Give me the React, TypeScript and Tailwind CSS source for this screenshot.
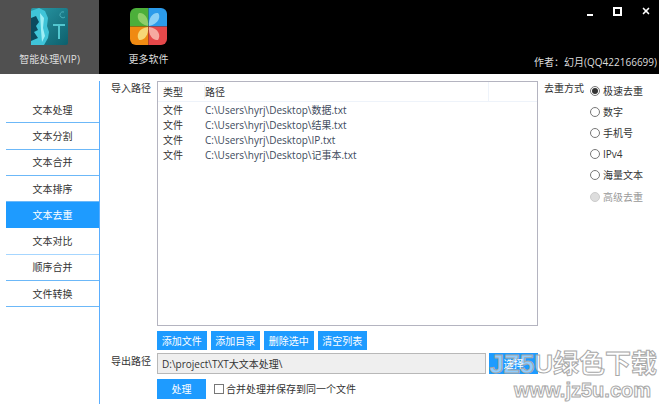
import { X } from 'lucide-react';

const font = 'font-["Open_Sans","Noto_Sans_CJK_SC",sans-serif]';

const navItems = ['文本处理', '文本分割', '文本合并', '文本排序', '文本去重', '文本对比', '顺序合并', '文件转换'];
const files = ['数据.txt', '结果.txt', 'IP.txt', '记事本.txt'];
const modes = ['极速去重', '数字', '手机号', 'IPv4', '海量文本', '高级去重'];
const actions = ['添加文件', '添加目录', '删除选中', '清空列表'];

function VipLogo() {
  return (
    <svg width="37" height="37" viewBox="0 0 37 37">
      <defs>
        <linearGradient id="vip" x1="0" y1="0" x2="1" y2="1">
          <stop offset="0" stopColor="#2a9aa8" />
          <stop offset="1" stopColor="#0d5f6c" />
        </linearGradient>
      </defs>
      <rect width="37" height="37" rx="2" fill="url(#vip)" />
      <path d="M0 3 L8 0 L14 3 L17 10 L16 18 L18 24 L17 30 L13 37 L0 37 Z" fill="#3fc4d8" />
      <path d="M0 10 L5 8 L8 14 L5 18 L7 22 L3 24 L7 30 L0 33 Z" fill="#0b4a5e" />
      <path d="M9 5 L13 10 L12 20 L14 28 L11 34 L10 22 Z" fill="#9eeef5" />
      <path d="M22 17 H34 M28 17 V31" stroke="#52c6cf" strokeWidth="2" fill="none" />
      <path d="M33 4 a3 3 0 1 0 1 5" stroke="#49aeb9" strokeWidth="1" fill="none" />
    </svg>
  );
}

function MoreLogo() {
  return (
    <svg width="37" height="37" viewBox="0 0 37 37">
      <clipPath id="tile">
        <rect width="37" height="37" rx="6" />
      </clipPath>
      <g clipPath="url(#tile)">
        <rect width="18.500" height="18.500" fill="#4caf3a" />
        <rect x="18.500" width="18.500" height="18.500" fill="#2b9bea" />
        <rect y="18.500" width="18.500" height="18.500" fill="#f08a12" />
        <rect x="18.500" y="18.500" width="18.500" height="18.500" fill="#e5484a" />
        <path d="M18 18 C8 16 6 8 9 5 C14 4 19 10 18 18 Z" fill="#8fd06a" />
        <path d="M19 18 C18 10 23 4 28 5 C31 8 29 16 19 18 Z" fill="#8ad0f5" />
        <path d="M18 19 C8 20 6 28 9 32 C14 33 19 27 18 19 Z" fill="#f7d777" />
        <path d="M19 19 C29 20 31 28 28 32 C23 33 18 27 19 19 Z" fill="#f6a9a0" />
      </g>
    </svg>
  );
}

export default function App() {
  return (
    <div className={`${font} relative h-[404px] w-[659px] overflow-hidden bg-white text-[10px] leading-none text-[#333]`}>
      {/* Top bar */}
      <header className="relative flex h-[74px] bg-black text-[#ddd]">
        <div className="flex w-[99px] flex-col items-center bg-[#505050] pt-2">
          <VipLogo />
          <span className="mt-[6px] leading-[16px]">智能处理(VIP)</span>
        </div>
        <div className="flex w-[99px] flex-col items-center pt-2">
          <MoreLogo />
          <span className="mt-[6px] leading-[16px]">更多软件</span>
        </div>
        <div className="absolute right-[8px] top-[6px] flex items-center text-white">
          <div className="mt-[7px] h-[2px] w-[6px] bg-white" />
          <div className="ml-[20px] h-[9px] w-[9px] border-2 border-white" />
          <X size={10} strokeWidth={4} className="ml-[19px]" />
        </div>
        <span className="absolute right-[2px] top-[55px] leading-[14px]">作者：幻月(QQ422166699)</span>
      </header>

      <div className="flex h-[330px] pt-[7px]">
        {/* Sidebar */}
        <nav className="h-[323px] w-[100px] border-r border-[#5aaeff] pl-[6px] pt-[16px]">
          {navItems.map((item, i) => (
            <div
              key={item}
              className={`flex h-[26.300px] items-center justify-center border-b ${
                i === 4 ? 'border-[#1e9bff] bg-[#1e9bff] text-white' : i === 5 ? 'border-[#a6d6ff]' : 'border-[#6cb8f8]'
              }`}
            >
              {item}
            </div>
          ))}
        </nav>

        {/* Main column */}
        <main className="ml-[11px] flex-1">
          <div className="flex h-[245px]">
            <span className="w-[46px] leading-[14px]">导入路径</span>
            <div className="w-[381px] border border-[#b4b4c0]">
              <div className="flex h-[20px] items-center border-b border-[#eef3fa]">
                <span className="w-[46px] pl-[5px] leading-[14px]">类型</span>
                <span className="w-[284px] border-l border-[#eef3fa] leading-[14px]">路径</span>
                <span className="h-full border-l border-[#eef3fa]" />
              </div>
              <div className="pl-[5px]">
                {files.map(file => (
                  <div key={file} className="flex h-[15px] items-center">
                    <span className="w-[42px]">文件</span>
                    <span className="text-[#3d4a5c]">C:\Users\hyrj\Desktop\{file}</span>
                  </div>
                ))}
              </div>
            </div>
            <div className="ml-[6px] flex">
              <span className="w-[46px] leading-[14px]">去重方式</span>
              <div className="-mt-[1px]">
                {modes.map((mode, i) => (
                  <div key={mode} className={`flex h-[21.200px] items-center gap-[3px] ${i === 5 ? 'text-[#999]' : ''}`}>
                    <span
                      className={`flex h-[10px] w-[10px] items-center justify-center rounded-full border ${
                        i === 5 ? 'border-[#ccc] bg-[#ddd]' : 'border-[#777]'
                      }`}
                    >
                      {i === 0 && <span className="h-[6px] w-[6px] rounded-full bg-[#333]" />}
                    </span>
                    {mode}
                  </div>
                ))}
              </div>
            </div>
          </div>

          <div className="ml-[46px] mt-[5px] flex gap-[4px]">
            {actions.map(action => (
              <button key={action} className="h-[19px] w-[49.500px] bg-[#1e9bff] text-white">
                {action}
              </button>
            ))}
          </div>

          <div className="mt-[3px] flex h-[21px]">
            <span className="w-[46px] pt-[1px] leading-[14px]">导出路径</span>
            <div className="flex w-[329px] items-center border border-[#b8b8b8] bg-[#efefef] pl-[4px]">D:\project\TXT大文本处理\</div>
            <button className="ml-[3px] w-[49px] bg-[#1e9bff] text-white">
              <span className="relative z-10">选择</span>
            </button>
          </div>

          <div className="ml-[46px] mt-[5px] flex h-[20px] items-center">
            <button className="h-full w-[49px] bg-[#1e9bff] text-white">处理</button>
            <span className="ml-[8px] h-[10px] w-[10px] border border-[#777]" />
            <span className="ml-[2px]">合并处理并保存到同一个文件</span>
          </div>
        </main>
      </div>

      {/* Watermark */}
      <div className="pointer-events-none absolute right-[2px] top-[349px] flex flex-col items-end font-['Liberation_Sans','Noto_Sans_CJK_SC',sans-serif] font-bold text-white/50 [-webkit-text-stroke:1px_#a8a8a8]">
        <span className="text-[26px] leading-[30px]">JZ5U绿色下载</span>
        <span className="pr-[6px] text-[20px] leading-[23px]">www.jz5u.com</span>
      </div>
    </div>
  );
}
